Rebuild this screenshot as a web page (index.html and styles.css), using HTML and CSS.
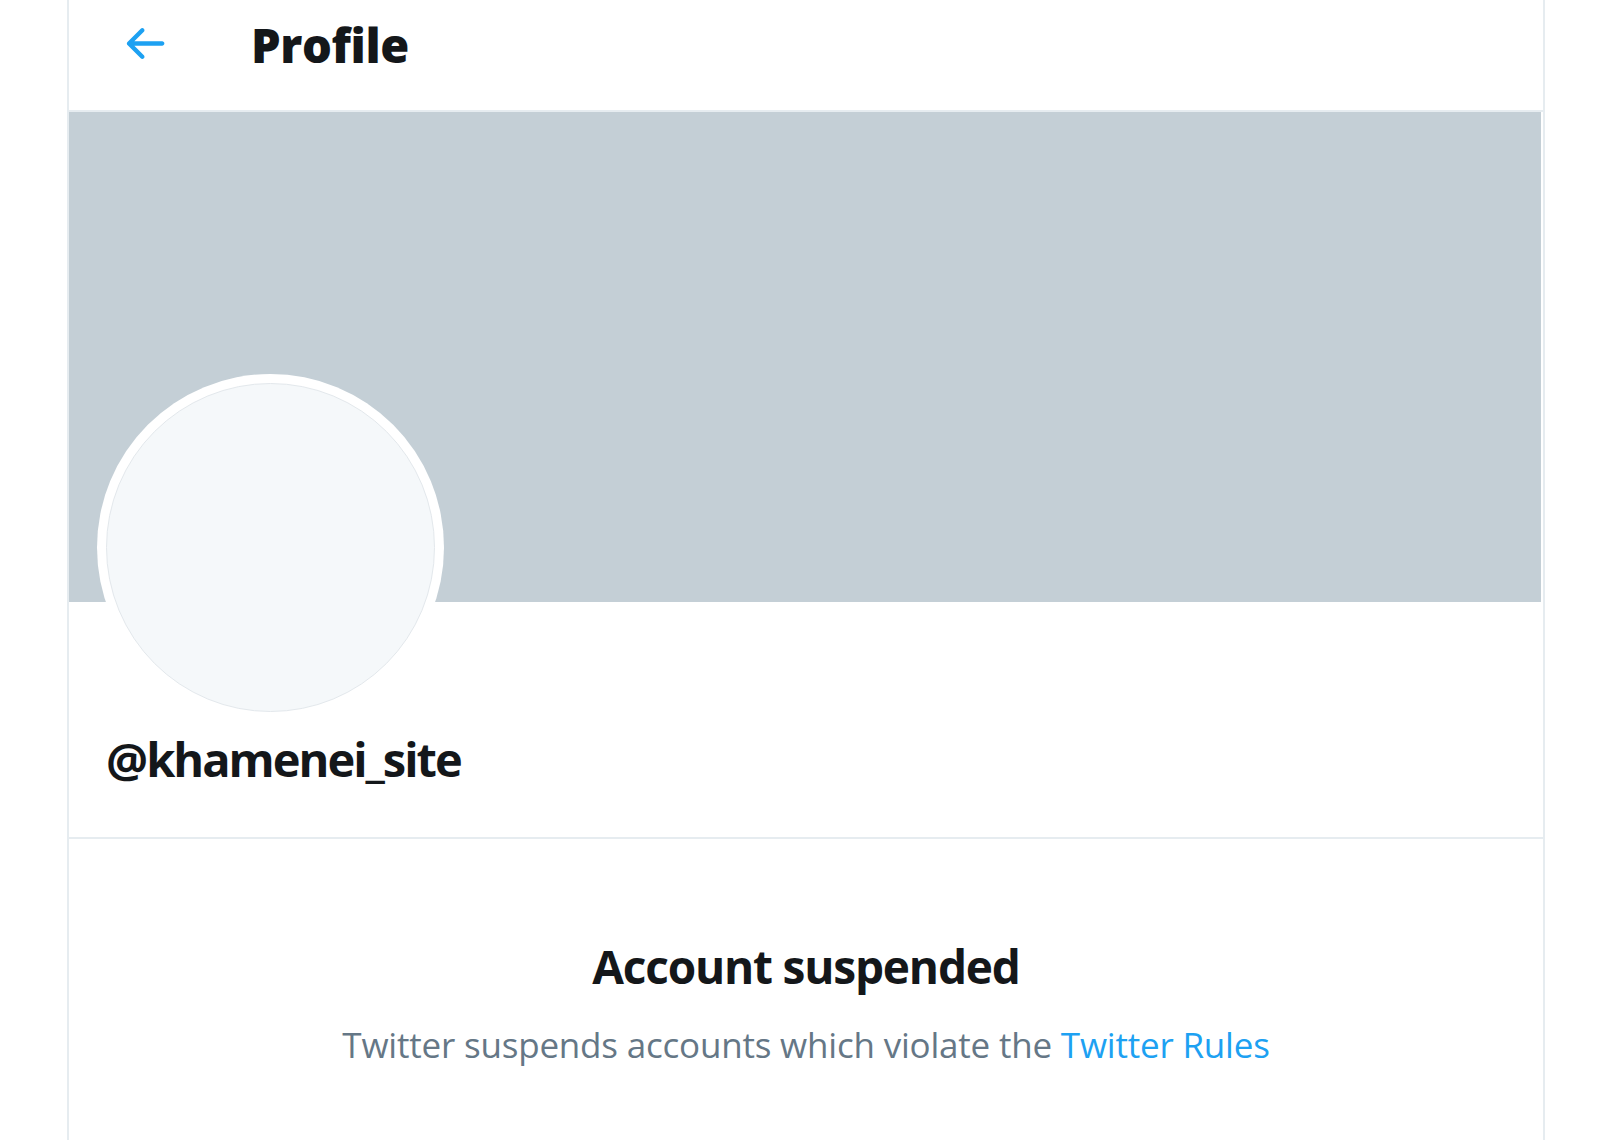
FILE: index.html
```html
<!DOCTYPE html>
<html lang="en">
<head>
<meta charset="utf-8">
<title>Profile</title>
<link rel="stylesheet" href="styles.css">
</head>
<body>
<div class="column">
  <header class="topbar">
    <svg class="back" viewBox="0 0 24 24" aria-hidden="true"><path d="M20 11H7.414l4.293-4.293c.39-.39.39-1.023 0-1.414s-1.023-.39-1.414 0l-6 6c-.39.39-.39 1.023 0 1.414l6 6c.195.195.45.293.707.293s.512-.098.707-.293c.39-.39.39-1.023 0-1.414L7.414 13H20c.553 0 1-.447 1-1s-.447-1-1-1z"/></svg>
    <h1 class="title">Profile</h1>
  </header>
  <section class="profile">
    <div class="banner"></div>
    <div class="avatar"><div class="avatar-inner"></div></div>
    <div class="handle">@khamenei_site</div>
  </section>
  <section class="notice">
    <h2 class="notice-title">Account suspended</h2>
    <p class="notice-text">Twitter suspends accounts which violate the <a class="link" href="#">Twitter Rules</a></p>
  </section>
</div>
</body>
</html>
```
FILE: styles.css
```css
html, body {
  margin: 0;
  padding: 0;
  background: #ffffff;
}
body {
  font-family: "Open Sans", "Noto Sans", sans-serif;
  color: #14171a;
}
.column {
  margin-left: 67px;
  width: 1474px;
  min-height: 1140px;
  border-left: 2px solid #e6ecf0;
  border-right: 2px solid #e6ecf0;
  box-sizing: content-box;
}
.topbar {
  box-sizing: border-box;
  height: 112px;
  padding: 13px 0 0 49px;
  border-bottom: 2px solid #e6ecf0;
  display: flex;
  align-items: flex-start;
}
.back {
  width: 53px;
  height: 53px;
  margin-top: 4px;
  fill: #1da1f2;
  flex: none;
}
.title {
  margin: 0 0 0 80px;
  font-size: 47px;
  line-height: 64px;
  font-weight: 800;
  letter-spacing: -0.4px;
  color: #14171a;
}
.profile {
  padding-bottom: 46px;
  border-bottom: 2px solid #e6ecf0;
}
.banner {
  height: 490px;
  margin-right: 2px;
  background: #c4cfd6;
}
.avatar {
  width: 347px;
  height: 347px;
  box-sizing: border-box;
  margin: -228px 0 0 28px;
  padding: 9px;
  border-radius: 50%;
  background: #ffffff;
  position: relative;
}
.avatar-inner {
  width: 100%;
  height: 100%;
  box-sizing: border-box;
  border-radius: 50%;
  background: #f5f8fa;
  border: 1px solid #e3e8ec;
}
.handle {
  margin: 6px 0 0 37px;
  font-size: 47px;
  line-height: 64px;
  font-weight: 700;
  letter-spacing: -2px;
  color: #14171a;
}
.notice {
  padding-top: 96px;
  text-align: center;
}
.notice-title {
  margin: 0;
  font-size: 46px;
  line-height: 63px;
  font-weight: 700;
  letter-spacing: -1.2px;
  color: #14171a;
}
.notice-text {
  margin: 23px 0 0;
  font-size: 35px;
  line-height: 48px;
  letter-spacing: -0.2px;
  color: #657786;
}
.link {
  color: #1da1f2;
  text-decoration: none;
}
```
